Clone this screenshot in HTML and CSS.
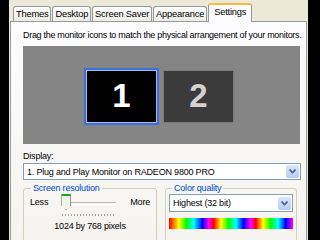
FILE: index.html
```html
<!DOCTYPE html>
<html lang="en">
<head>
    <meta charset="UTF-8">
    <meta name="viewport" content="width=device-width, initial-scale=1.0">
    <title>Display Properties</title>
    <link rel="stylesheet" href="styles.css">
</head>
<body>
    <div class="dialog">
        <div class="tabs">
            <div class="tab">Themes</div>
            <div class="tab">Desktop</div>
            <div class="tab">Screen Saver</div>
            <div class="tab">Appearance</div>
            <div class="tab active">Settings</div>
        </div>

        <div class="panel">
            <p class="hint">Drag the monitor icons to match the physical arrangement of your monitors.</p>

            <div class="monitors">
                <div class="monitor selected">1</div>
                <div class="monitor second">2</div>
            </div>

            <label class="label">Display:</label>
            <div class="combo wide">
                <span>1. Plug and Play Monitor on RADEON 9800 PRO</span>
                <span class="drop"><svg width="7" height="5" viewBox="0 0 7 5"><path d="M0.5 0.5 L3.5 3.5 L6.5 0.5" fill="none" stroke="#4d6185" stroke-width="1.6"/></svg></span>
            </div>

            <div class="groups">
                <fieldset class="group res">
                    <legend>Screen resolution</legend>
                    <div class="slider-row">
                        <span>Less</span>
                        <div class="slider">
                            <div class="track"></div>
                            <div class="thumb"></div>
                            <div class="ticks"></div>
                        </div>
                        <span>More</span>
                    </div>
                    <div class="pixels">1024 by 768 pixels</div>
                </fieldset>

                <fieldset class="group color">
                    <legend>Color quality</legend>
                    <div class="combo">
                        <span>Highest (32 bit)</span>
                        <span class="drop"><svg width="7" height="5" viewBox="0 0 7 5"><path d="M0.5 0.5 L3.5 3.5 L6.5 0.5" fill="none" stroke="#4d6185" stroke-width="1.6"/></svg></span>
                    </div>
                    <div class="rainbow"></div>
                </fieldset>
            </div>
        </div>
    </div>
</body>
</html>
```

FILE: styles.css
```css
body {
    margin: 0;
    width: 320px;
    height: 240px;
    overflow: hidden;
    background: #000;
    font-family: "Liberation Sans", Arial, sans-serif;
    font-size: 9px;
    letter-spacing: -0.2px;
    color: #000;
}
.dialog {
    margin-left: 9px;
    width: 299px;
    height: 240px;
    overflow: hidden;
    background: #ece9d8;
}
.tabs {
    display: flex;
    align-items: flex-end;
    height: 22px;
    padding-left: 4px;
    gap: 1px;
    position: relative;
    z-index: 1;
}
.tab {
    height: 14px;
    line-height: 15px;
    padding: 0 2px;
    margin-bottom: 1px;
    border: 1px solid #919b9c;
    border-bottom: none;
    border-radius: 3px 3px 0 0;
    background: linear-gradient(#fff, #ecebe6);
    font-size: 9.3px;
}
.tab.active {
    height: 17px;
    line-height: 14px;
    margin-bottom: 0;
    padding: 0 5px;
    border-top: 2px solid #f7bd3a;
    background: #fcfcfe;
}
.panel {
    margin-left: 1px;
    margin-top: -1px;
    width: 297px;
    height: 240px;
    border: 1px solid #919b9c;
    background: linear-gradient(#fcfcfe, #f4f3ee);
    padding: 7px 5px 0 12px;
    box-sizing: border-box;
}
.hint {
    margin: 0;
    line-height: 13px;
    letter-spacing: -0.3px;
    white-space: nowrap;
}
.monitors {
    margin-top: 4px;
    height: 98px;
    width: 277px;
    background: #858585;
    display: flex;
    align-items: center;
    gap: 4px;
    padding: 2px 0 0 61px;
    box-sizing: border-box;
}
.monitor {
    display: flex;
    align-items: center;
    justify-content: center;
    font-weight: bold;
    font-size: 33px;
    letter-spacing: 0;
}
.monitor.selected {
    width: 71px;
    height: 53px;
    background: #000;
    color: #fff;
    border: 2px solid #3e6fd8;
    box-shadow: inset 0 0 0 1px #9fb8ee;
}
.monitor.second {
    width: 69px;
    height: 51px;
    background: #3b3b3b;
    color: #d2d2d2;
    border: 1px solid #7a7a7a;
}
.label {
    display: block;
    margin-top: 6px;
    line-height: 12px;
}
.combo {
    display: flex;
    align-items: center;
    justify-content: space-between;
    height: 15px;
    border: 1px solid #7f9db9;
    background: #fff;
    padding-left: 3px;
}
.combo.wide {
    margin-top: 1px;
    width: 273px;
}
.drop {
    width: 13px;
    height: 13px;
    margin-right: 1px;
    display: flex;
    align-items: center;
    justify-content: center;
    border-radius: 2px;
    background: linear-gradient(#dbe5fb, #b7cbf3);
}
.groups {
    display: flex;
    gap: 8px;
    margin-top: 3px;
}
.group {
    margin: 0;
    padding: 0 4px;
    border: 1px solid #d0d0bf;
    border-radius: 3px;
    height: 64px;
    box-sizing: border-box;
}
.group legend {
    color: #0046d5;
    padding: 0 2px;
    margin-left: 3px;
    line-height: 11px;
}
.res {
    width: 134px;
}
.color {
    width: 132px;
    padding: 0 3px;
}
.slider-row {
    display: flex;
    justify-content: space-between;
    align-items: flex-start;
    padding: 3px 2px 0 2px;
}
.slider {
    position: relative;
    width: 54px;
    height: 22px;
}
.track {
    position: absolute;
    left: 0;
    right: 0;
    top: 5px;
    height: 1px;
    border-top: 1px solid #b9b9ad;
    border-bottom: 1px solid #fff;
}
.thumb {
    position: absolute;
    left: -1px;
    top: -3px;
    width: 8px;
    height: 13px;
    background: #f4f4ee;
    border: 1px solid #90958e;
    border-top: 2px solid #21a121;
    border-radius: 1px 1px 0 0;
    clip-path: polygon(0 0, 100% 0, 100% 72%, 50% 100%, 0 72%);
}
.ticks {
    position: absolute;
    left: 0;
    right: 0;
    top: 17px;
    height: 2px;
    background: repeating-linear-gradient(90deg, #a1a192 0 1px, transparent 1px 3px);
}
.pixels {
    text-align: center;
    margin-top: 2px;
}
.color .combo {
    margin-top: 0;
    height: 16px;
}
.rainbow {
    margin-top: 6px;
    height: 11px;
    background: linear-gradient(90deg, #f00, #ff0 8%, #0f0 14%, #0ff 20%, #00f 27%, #f0f 32%, #f00 36%, #ff0 42%, #0f0 48%, #0ff 54%, #00f 60%, #f0f 66%, #f00 70%, #ff0 76%, #0f0 82%, #0ff 88%, #00f 94%, #f0f);
}
```
